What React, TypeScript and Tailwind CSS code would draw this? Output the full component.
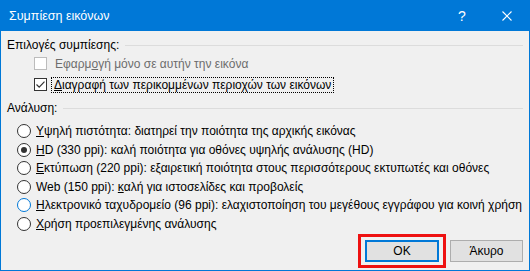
import type { ReactNode } from "react";

const FONT = { fontFamily: '"Liberation Sans", "Segoe UI", sans-serif' };

function Checkbox({ checked, disabled }: { checked?: boolean; disabled?: boolean }) {
  return (
    <span
      className={`flex h-[13px] w-[13px] flex-none items-center justify-center border bg-white ${
        disabled ? "border-[#bcbcbc]" : "border-[#333333]"
      }`}
    >
      {checked && (
        <svg width="11" height="11" viewBox="0 0 11 11">
          <path d="M1.5 5.5 L4.2 8.2 L9.5 2.6" fill="none" stroke="#333333" strokeWidth="1.2" />
        </svg>
      )}
    </span>
  );
}

function Radio({ checked, hover }: { checked?: boolean; hover?: boolean }) {
  return (
    <span
      className={`flex h-[14px] w-[14px] flex-none items-center justify-center rounded-full border bg-white ${
        hover ? "border-[#0078d7]" : "border-[#333333]"
      }`}
    >
      {checked && <span className="h-[6px] w-[6px] rounded-full bg-[#333333]" />}
    </span>
  );
}

function GroupTitle({ children }: { children: ReactNode }) {
  return (
    <div className="flex h-[16px] items-center">
      <span className="pr-[6px]">{children}</span>
      <span className="h-px flex-1 bg-[#dcdcdc]" />
    </div>
  );
}

const OPTIONS: { pre: string; u: string; post: string; checked?: boolean; hover?: boolean }[] = [
  { pre: "", u: "Υ", post: "ψηλή πιστότητα: διατηρεί την ποιότητα της αρχικής εικόνας" },
  { pre: "", u: "H", post: "D (330 ppi): καλή ποιότητα για οθόνες υψηλής ανάλυσης (HD)", checked: true },
  { pre: "", u: "Ε", post: "κτύπωση (220 ppi): εξαιρετική ποιότητα στους περισσότερους εκτυπωτές και οθόνες" },
  { pre: "Web (150 ppi): ", u: "κ", post: "αλή για ιστοσελίδες και προβολείς" },
  {
    pre: "",
    u: "Η",
    post: "λεκτρονικό ταχυδρομείο (96 ppi): ελαχιστοποίηση του μεγέθους εγγράφου για κοινή χρήση",
    hover: true,
  },
  { pre: "", u: "Χ", post: "ρήση προεπιλεγμένης ανάλυσης" },
];

export default function App() {
  return (
    <div
      className="flex h-[271px] w-[530px] flex-col border border-[#0078d7] bg-[#f0f0f0] text-[12px] text-black"
      style={FONT}
    >
      {/* title bar */}
      <div className="flex h-[30px] flex-none items-center bg-[#0078d7] text-white">
        <span className="pl-[8px] text-[12.5px]">Συμπίεση εικόνων</span>
        <span className="ml-auto w-[14px] text-[14px] leading-none">?</span>
        <span className="ml-[30px] mr-[17px] flex h-[10px] w-[10px]">
          <svg width="10" height="10" viewBox="0 0 10 10">
            <path d="M0.5 0.5 L9.5 9.5 M9.5 0.5 L0.5 9.5" stroke="white" strokeWidth="1.1" />
          </svg>
        </span>
      </div>

      <div className="flex flex-1 flex-col pl-[6px] pr-[6px] pt-[6px]">
        <GroupTitle>Επιλογές συμπίεσης:</GroupTitle>
        <div className="mt-[4px] flex h-[13px] items-center pl-[27px]">
          <Checkbox disabled />
          <span className="ml-[8px] text-[#6d6d6d]">
            Εφαρμ<span className="underline">ο</span>γή μόνο σε αυτήν την εικόνα
          </span>
        </div>
        <div className="mt-[8px] flex h-[13px] items-center pl-[27px]">
          <Checkbox checked />
          <span className="ml-[4px] border border-dotted border-black px-[2px] leading-[14px]">
            <span className="underline">Δ</span>ιαγραφή των περικομμένων περιοχών των εικόνων
          </span>
        </div>

        <div className="mt-[9px]">
          <GroupTitle>Ανάλυση:</GroupTitle>
        </div>
        <div className="mt-[6px] flex flex-col pl-[10px]">
          {OPTIONS.map((o, i) => (
            <div key={i} className="flex h-[18.5px] items-center">
              <Radio checked={o.checked} hover={o.hover} />
              <span className="ml-[5px] whitespace-nowrap">
                {o.pre}
                <span className="underline">{o.u}</span>
                {o.post}
              </span>
            </div>
          ))}
        </div>

        <div className="mt-auto mb-[8px] flex justify-end gap-[11px]">
          <div className="relative">
            <button className="h-[22px] w-[74px] border-2 border-[#0078d7] bg-[#e1e1e1] text-[12px]">
              OK
            </button>
            <span className="pointer-events-none absolute -bottom-[6px] -left-[7px] -right-[7px] -top-[6px] border-[3px] border-[#ee1111]" />
          </div>
          <button className="h-[22px] w-[73px] border border-[#adadad] bg-[#e1e1e1] text-[12px]">
            Άκυρο
          </button>
        </div>
      </div>
    </div>
  );
}
